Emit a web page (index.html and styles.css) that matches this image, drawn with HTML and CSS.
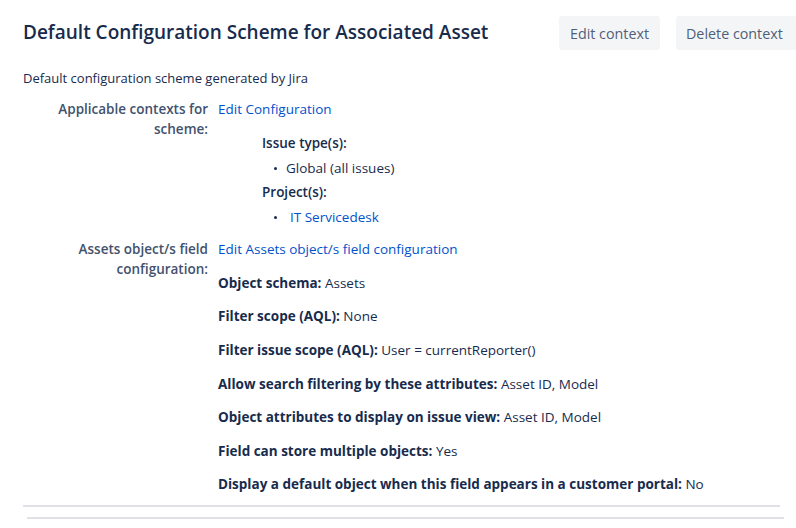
FILE: index.html
```html
<!DOCTYPE html>
<html>
<head>
<meta charset="utf-8">
<link rel="stylesheet" href="styles.css">
</head>
<body>
<div class="page">
  <div class="header">
    <h2 class="title">Default Configuration Scheme for Associated Asset</h2>
    <div class="actions">
      <button class="btn">Edit context</button>
      <button class="btn">Delete context</button>
    </div>
  </div>
  <p class="desc">Default configuration scheme generated by Jira</p>
  <div class="rows">
    <div class="row">
      <div class="label">Applicable contexts for scheme:</div>
      <div class="value">
        <a class="link">Edit Configuration</a>
        <div class="contexts">
          <div class="ctx-title">Issue type(s):</div>
          <ul class="ctx-list"><li>Global (all issues)</li></ul>
          <div class="ctx-title">Project(s):</div>
          <ul class="ctx-list"><li><a class="link proj">IT Servicedesk</a></li></ul>
        </div>
      </div>
    </div>
    <div class="row row2">
      <div class="label">Assets object/s field configuration:</div>
      <div class="value">
        <a class="link">Edit Assets object/s field configuration</a>
        <div class="props">
          <p><b>Object schema:</b> Assets</p>
          <p><b>Filter scope (AQL):</b> None</p>
          <p><b>Filter issue scope (AQL):</b> User = currentReporter()</p>
          <p><b>Allow search filtering by these attributes:</b> Asset ID, Model</p>
          <p><b>Object attributes to display on issue view:</b> Asset ID, Model</p>
          <p><b>Field can store multiple objects:</b> Yes</p>
          <p><b>Display a default object when this field appears in a customer portal:</b> No</p>
        </div>
      </div>
    </div>
  </div>
  <div class="rule1"></div>
  <div class="rule2"></div>
</div>
</body>
</html>
```
FILE: styles.css
```css
html, body {
  margin: 0;
  padding: 0;
  background: #fff;
}
body {
  font-family: "Open Sans", "Noto Sans", sans-serif;
  font-size: 13.5px;
  color: #172b4d;
  overflow: hidden;
}
.page {
  padding: 0 0 0 23px;
  width: 773px;
}
.header {
  display: flex;
  align-items: flex-start;
  padding-top: 16px;
}
.title {
  margin: 0;
  font-size: 19px;
  font-weight: 600;
  color: #172b4d;
  line-height: 32px;
  flex: 1;
}
.actions {
  display: flex;
  gap: 16px;
  margin-right: -1px;
}
.btn {
  font-family: inherit;
  font-size: 14.3px;
  color: #505f79;
  background: #f4f5f7;
  border: none;
  border-radius: 3px;
  height: 34px;
  padding: 0 10px;
  white-space: nowrap;
}
.btn:first-child { width: 101px; }
.btn:last-child { width: 121px; text-align: left; }
.desc {
  margin: 18px 0 0 0;
  line-height: 20px;
  font-size: 13px;
  color: #172b4d;
}
.rows {
  margin-top: 11px;
}
.row {
  display: flex;
  line-height: 20px;
}
.label {
  width: 185px;
  flex: none;
  text-align: right;
  font-weight: 600;
  color: #42526e;
  padding-right: 10px;
}
.value {
  flex: 1;
}
.link {
  color: #0052cc;
}
.contexts {
  padding: 10px 0 0 44px;
}
.ctx-title {
  font-weight: 600;
  color: #172b4d;
  margin: 4px 0 5px 0;
}
.ctx-list {
  margin: 0;
  padding-left: 24px;
  list-style: none;
}
.ctx-list li {
  position: relative;
  line-height: 20px;
  margin: 0 0 4px 0;
}
.ctx-list li::before {
  content: "";
  position: absolute;
  left: -12px;
  top: 9px;
  width: 3px;
  height: 3px;
  border-radius: 50%;
  background: #172b4d;
}
.proj {
  margin-left: 4px;
}
.row2 {
  margin-top: 8px;
}
.props p {
  margin: 13.65px 0 0 0;
  line-height: 20px;
}
.props b {
  font-weight: 700;
}
.rule1 {
  margin-top: 11px;
  height: 2px;
  background: #dfe1e6;
  width: 757px;
}
.rule2 {
  margin: 10px 0 0 4px;
  height: 2px;
  background: #dfe1e6;
  width: 757px;
}
```
